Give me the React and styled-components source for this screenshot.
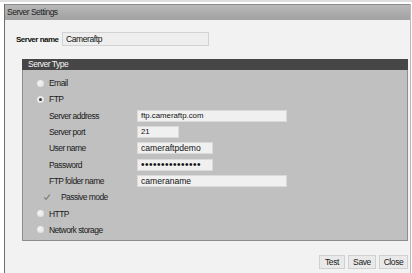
import React from 'react'
import styled, { createGlobalStyle } from 'styled-components';

const GlobalStyle = createGlobalStyle`
  html, body {
    margin: 0;
    padding: 0;
    background: #ffffff;
  }
  body {
    font-family: "Liberation Sans", Arial, sans-serif;
    color: #1a1a1a;
  }
`;

const fields = [
  { label: 'Server address', value: 'ftp.cameraftp.com', width: 150 },
  { label: 'Server port', value: '21', width: 42 },
  { label: 'User name', value: 'cameraftpdemo', width: 76, big: true },
  { label: 'Password', value: '•••••••••••••••', width: 76, dots: true },
  { label: 'FTP folder name', value: 'cameraname', width: 150, big: true },
];

const Radio = ({ checked, children }) => (
  <Row>
    <RadioDot $checked={checked} />
    <Label>{children}</Label>
  </Row>
);

const App = () => {
  return (
    <Page>
      <GlobalStyle />
      <Frame>
        <TitleBar>Server Settings</TitleBar>
        <Body>
          <NameRow>
            <NameLabel>Server name</NameLabel>
            <NameInput>Cameraftp</NameInput>
          </NameRow>

          <Panel>
            <PanelHead>Server Type</PanelHead>
            <PanelBody>
              <Radio>Email</Radio>
              <Radio checked>FTP</Radio>
              {fields.map((f) => (
                <FieldRow key={f.label}>
                  <FieldLabel>{f.label}</FieldLabel>
                  <FieldInput $big={f.big} $dots={f.dots} style={{ width: f.width }}>
                    {f.value}
                  </FieldInput>
                </FieldRow>
              ))}
              <CheckRow>
                <CheckBox>
                  <svg width="8" height="8" viewBox="0 0 8 8">
                    <path d="M1.2 4.4 L3 6.4 L6.8 1.6" fill="none" stroke="#7a7a7a" strokeWidth="1.1" />
                  </svg>
                </CheckBox>
                <Label>Passive mode</Label>
              </CheckRow>
              <Radio>HTTP</Radio>
              <Radio>Network storage</Radio>
            </PanelBody>
          </Panel>

          <Buttons>
            <Button $w={26}>Test</Button>
            <Button $w={28}>Save</Button>
            <Button $w={29}>Close</Button>
          </Buttons>
        </Body>
      </Frame>
    </Page>
  )
}

export default App;


const Page = styled.div`
  width: 412px;
  height: 273px;
  overflow: hidden;
  border-top: 2px solid #dedede;
  box-sizing: border-box;
  padding-top: 2px;
`;

const Frame = styled.div`
  margin-left: 4px;
  width: 407px;
  height: 269px;
  box-sizing: border-box;
  border-left: 1px solid #6e6e6e;
  border-right: 1px solid #b8b8b8;
  background: #f2f2f2;
  display: flex;
  flex-direction: column;
`;

const TitleBar = styled.div`
  height: 16px;
  box-sizing: border-box;
  border-top: 1px solid #8c8c8c;
  background: linear-gradient(#b9b9b9 0%, #acacac 50%, #a2a2a2 100%);
  font-size: 8.5px;
  letter-spacing: -0.5px;
  line-height: 15px;
  padding-left: 2px;
  color: #1e1e1e;
`;

const Body = styled.div`
  flex: 1;
  display: flex;
  flex-direction: column;
  padding: 12px 2px 0 17px;
`;

const NameRow = styled.div`
  display: flex;
  align-items: center;
  height: 14px;
  margin-left: -6px;
`;

const NameLabel = styled.div`
  width: 46px;
  font-size: 8px;
  font-weight: bold;
  letter-spacing: -0.5px;
  color: #111;
`;

const NameInput = styled.div`
  width: 147px;
  height: 14px;
  box-sizing: border-box;
  border: 1px solid #d2d2d2;
  background: #eeeeee;
  font-size: 8.5px;
  letter-spacing: -0.4px;
  line-height: 12px;
  padding-left: 3px;
  color: #111;
`;

const Panel = styled.div`
  margin-top: 13px;
  display: flex;
  flex-direction: column;
  height: 182px;
`;

const PanelHead = styled.div`
  height: 11px;
  background: #464646;
  color: #f4f4f4;
  font-size: 8.5px;
  letter-spacing: -0.5px;
  line-height: 11px;
  padding-left: 6px;
`;

const PanelBody = styled.div`
  flex: 1;
  background: #c0c0c0;
  border: 1px solid #8e8e8e;
  border-top: none;
  padding-top: 5px;
  display: flex;
  flex-direction: column;
`;

const Row = styled.div`
  height: 16.3px;
  display: flex;
  align-items: center;
  padding-left: 14px;
`;

const RadioDot = styled.span`
  width: 7px;
  height: 7px;
  border-radius: 50%;
  background: radial-gradient(circle at 40% 40%, #f6f6f6 0%, #e2e2e2 70%, #cfcfcf 100%);
  margin-right: 5px;
  display: flex;
  align-items: center;
  justify-content: center;
  &::after {
    content: '';
    width: 3px;
    height: 3px;
    border-radius: 50%;
    background: ${(p) => (p.$checked ? '#3a3a3a' : 'transparent')};
  }
`;

const Label = styled.span`
  font-size: 8.5px;
  letter-spacing: -0.55px;
  color: #1a1a1a;
`;

const FieldRow = styled.div`
  height: 16.3px;
  display: flex;
  align-items: center;
  padding-left: 26px;
`;

const FieldLabel = styled.span`
  width: 88px;
  font-size: 8.5px;
  letter-spacing: -0.55px;
  color: #1a1a1a;
`;

const FieldInput = styled.div`
  height: 12px;
  box-sizing: border-box;
  background: #f0f0f0;
  border: 1px solid #dadada;
  padding-left: 3px;
  font-size: ${(p) => (p.$dots ? '10px' : p.$big ? '8.6px' : '7.8px')};
  letter-spacing: ${(p) => (p.$dots ? '0.5px' : '0')};
  line-height: 10px;
  color: #111;
  white-space: nowrap;
  overflow: hidden;
`;

const CheckRow = styled.div`
  height: 16.3px;
  display: flex;
  align-items: center;
  padding-left: 20px;
`;

const CheckBox = styled.span`
  width: 8px;
  height: 8px;
  margin-right: 10px;
  display: flex;
`;

const Buttons = styled.div`
  display: flex;
  justify-content: flex-end;
  gap: 3px;
  margin-top: 14px;
`;

const Button = styled.div`
  width: ${(p) => p.$w}px;
  height: 14px;
  box-sizing: border-box;
  background: #e9e9e9;
  border: 1px solid #d0d0d0;
  font-size: 8.5px;
  letter-spacing: -0.4px;
  line-height: 12px;
  text-align: center;
  color: #1a1a1a;
`;
